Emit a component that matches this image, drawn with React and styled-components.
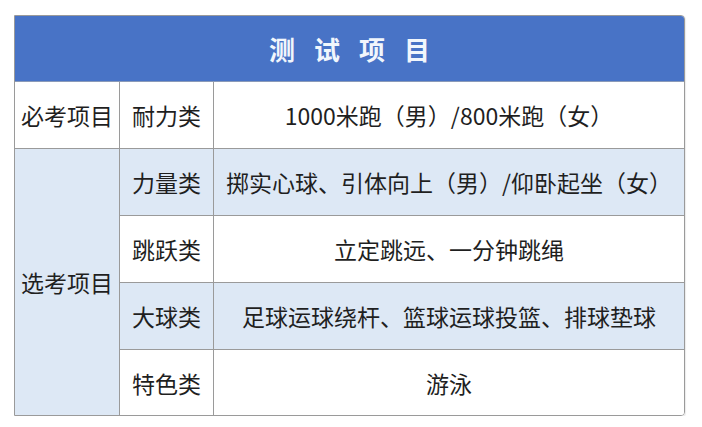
import React from "react";
import styled, { createGlobalStyle } from "styled-components";

const GlobalStyle = createGlobalStyle`
  body {
    margin: 0;
    background: #ffffff;
    font-family: "Noto Sans CJK SC", "Noto Sans", sans-serif;
  }
`;

const Page = styled.div`
  padding: 15px 0 0 14px;
`;

const Table = styled.table`
  width: 671px;
  border-collapse: separate;
  border-spacing: 0;
  border: 1px solid #9a9a9a;
  border-radius: 0 4px 4px 0;
  overflow: hidden;
  table-layout: fixed;
  box-shadow: 1px 1px 1px rgba(0, 0, 0, 0.08);
`;

const HeaderCell = styled.th`
  height: 65px;
  background: #4873c6;
  color: #f1f6fc;
  font-size: 26px;
  font-weight: 700;
  letter-spacing: 19px;
  text-indent: 19px;
  text-align: center;
  padding: 0;
  border-bottom: 1px solid #8a9ab8;
`;

const Row = styled.tr`
  height: ${(p) => p.$h || 67}px;
`;

const Cell = styled.td`
  background: ${(p) => (p.$shade ? "#dde8f5" : "#ffffff")};
  color: #1f1f1f;
  font-size: 23px;
  text-align: center;
  padding: 0;
  white-space: nowrap;
  border-right: ${(p) => (p.$last ? "none" : "1px solid #9a9a9a")};
  border-bottom: ${(p) => (p.$bottom ? "none" : "1px solid #9a9a9a")};
`;

const rows = [
  { cat: "力量类", items: "掷实心球、引体向上（男）/仰卧起坐（女）", shade: true },
  { cat: "跳跃类", items: "立定跳远、一分钟跳绳", shade: false },
  { cat: "大球类", items: "足球运球绕杆、篮球运球投篮、排球垫球", shade: true },
  { cat: "特色类", items: "游泳", shade: false },
];

const App = () => {
  return (
    <Page>
      <GlobalStyle />
      <Table>
        <colgroup>
          <col style={{ width: 105 }} />
          <col style={{ width: 94 }} />
          <col />
        </colgroup>
        <thead>
          <tr>
            <HeaderCell colSpan={3}>测试项目</HeaderCell>
          </tr>
        </thead>
        <tbody>
          <Row>
            <Cell>必考项目</Cell>
            <Cell>耐力类</Cell>
            <Cell $last>1000米跑（男）/800米跑（女）</Cell>
          </Row>
          {rows.map((r, i) => {
            const isLast = i === rows.length - 1;
            return (
              <Row key={r.cat} $h={isLast ? 65 : 67}>
                {i === 0 && (
                  <Cell rowSpan={rows.length} $shade $bottom>
                    选考项目
                  </Cell>
                )}
                <Cell $shade={r.shade} $bottom={isLast}>
                  {r.cat}
                </Cell>
                <Cell $shade={r.shade} $bottom={isLast} $last>
                  {r.items}
                </Cell>
              </Row>
            );
          })}
        </tbody>
      </Table>
    </Page>
  );
};

export default App;
